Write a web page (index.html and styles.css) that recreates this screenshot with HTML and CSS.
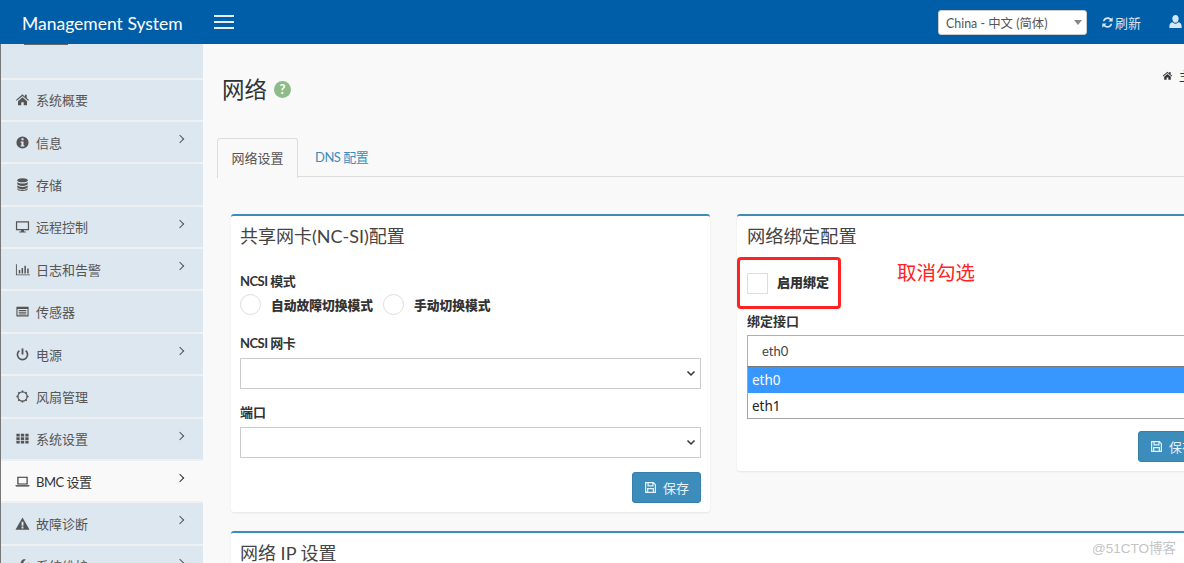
FILE: index.html
```html
<!DOCTYPE html>
<html>
<head>
    <title>Management System</title>
    <link rel="stylesheet" href="styles.css">
</head>
<body>
    <header class="topbar">
        <div class="brand">Management System</div>
        <div class="burger"><span></span><span></span><span></span></div>
        <div class="topbar-right">
            <div class="lang">China - 中文 (简体)<i class="lang-caret"></i></div>
            <div class="refresh">
                <svg width="13" height="13" viewBox="0 0 16 16"><path fill="#d5e6f5" d="M2.2 6.6C2.8 3.6 5.2 1.6 8.2 1.6c1.7 0 3.2.7 4.3 1.7L14.4 1.5v5.3H9.1l2-2c-.7-.7-1.8-1.1-2.9-1.1-1.9 0-3.4 1.200-4 2.900zM13.800 9.400c-.6 3-3 5-6 5-1.700 0-3.200-.7-4.300-1.700l-1.900 1.800V9.200h5.300l-2 2c.7.7 1.800 1.100 2.900 1.100 1.900 0 3.400-1.200 4-2.900z"/></svg>
                <span>刷新</span>
            </div>
            <svg class="user" width="15" height="15" viewBox="0 0 16 16"><path fill="#d5e6f5" d="M8 1c2 0 3.400 1.600 3.400 3.800S10 9.400 8 9.400 4.600 7 4.600 4.800 6 1 8 1zM5.200 8.800C6 9.800 7 10.400 8 10.400s2-.6 2.800-1.600c2 .3 3.700 1.500 3.700 3.800V15h-13v-2.400c0-2.300 1.700-3.500 3.700-3.800z"/></svg>
        </div>
    </header>

    <div class="layout">
        <nav class="sidebar">
            <div class="nav-top"><div class="nav-line"></div></div>
            <div class="nav-item">
                <svg class="nav-icon" viewBox="0 0 16 16"><path d="M8 2.500 1 8.500l.8.900L8 4.200l6.200 5.200.8-.9-2.500-2.100V3h-2v2.100zM3.200 9.800V14h3.500v-3h2.600v3h3.500V9.800L8 5.700z"/></svg>
                <span>系统概要</span>
            </div>
            <div class="nav-item">
                <svg class="nav-icon" viewBox="0 0 16 16"><path fill-rule="evenodd" d="M8 1.500a6.500 6.500 0 1 1 0 13 6.500 6.500 0 0 1 0-13zM6.900 3.500v2h2.200v-2zM6 6.800v1.400h.9v2.600H6v1.400h4v-1.400h-.9v-4z"/></svg>
                <span>信息</span><i class="chev"></i>
            </div>
            <div class="nav-item">
                <svg class="nav-icon" viewBox="0 0 16 16"><ellipse cx="8" cy="3.500" rx="5.500" ry="2.200"/><path d="M2.500 5.200c.8 1.200 3 1.800 5.500 1.800s4.700-.6 5.500-1.800v2.300C13.500 8.700 11 9.500 8 9.500s-5.500-.8-5.500-2zM2.500 8.800c.8 1.200 3 1.800 5.500 1.800s4.700-.6 5.500-1.800V11c0 1.200-2.500 2-5.500 2s-5.500-.8-5.500-2zM2.500 12.100c.8 1.100 3 1.600 5.500 1.600s4.700-.5 5.500-1.600v1c0 1-2.500 1.800-5.500 1.800s-5.500-.8-5.500-1.800z"/></svg>
                <span>存储</span>
            </div>
            <div class="nav-item">
                <svg class="nav-icon" viewBox="0 0 16 16"><path fill-rule="evenodd" d="M1 2.500h14v9.500H9.500v1.200h2v1.200h-7v-1.200h2V12H1zM2.300 3.800v6.900h11.400V3.800z"/></svg>
                <span>远程控制</span><i class="chev"></i>
            </div>
            <div class="nav-item">
                <svg class="nav-icon" viewBox="0 0 16 16"><path d="M1 2.500h1v10.700h14v1H1zM4 8.500h1.600v3.800H4zM7 6.500h1.600v5.800H7zM10 4h1.600v8.300H10zM13 7h1.600v5.300H13z"/></svg>
                <span>日志和告警</span><i class="chev"></i>
            </div>
            <div class="nav-item">
                <svg class="nav-icon" viewBox="0 0 16 16"><path fill-rule="evenodd" d="M1.500 2.800h13v10.400h-13zM2.700 5.200v6.800h10.600V5.200zM4 6.500h8v1H4zM4 8.300h8v1H4zM4 10.100h8v1H4z"/></svg>
                <span>传感器</span>
            </div>
            <div class="nav-item">
                <svg class="nav-icon" viewBox="0 0 16 16"><path d="M7 1.500h2v6.500H7z"/><path fill="none" stroke="#555" stroke-width="1.800" d="M4.700 3.800a5.400 5.400 0 1 0 6.600 0"/></svg>
                <span>电源</span><i class="chev"></i>
            </div>
            <div class="nav-item">
                <svg class="nav-icon" viewBox="0 0 16 16"><circle cx="8" cy="8" r="4.900" fill="none" stroke="#555" stroke-width="1.300"/><path d="M7.200 1.500h1.600v2H7.200zM7.200 12.500h1.600v2H7.200zM1.500 7.200h2v1.600h-2zM12.500 7.200h2v1.600h-2zM3 4.100l1.100-1.100 1.400 1.400-1.100 1.100zM10.500 11.600l1.100-1.100 1.400 1.400-1.100 1.100zM3 11.900l1.400-1.400 1.100 1.100-1.400 1.400zM10.500 4.400l1.400-1.400 1.100 1.100-1.400 1.400z"/></svg>
                <span>风扇管理</span>
            </div>
            <div class="nav-item">
                <svg class="nav-icon" viewBox="0 0 16 16"><path d="M1.500 3h3.500v2.800H1.500zM6.200 3h3.600v2.800H6.200zM11 3h3.500v2.800H11zM1.500 6.700h3.500v2.800H1.500zM6.200 6.700h3.600v2.800H6.200zM11 6.700h3.500v2.800H11zM1.500 10.400h3.500v2.800H1.500zM6.200 10.400h3.600v2.800H6.200zM11 10.400h3.500v2.800H11z"/></svg>
                <span>系统设置</span><i class="chev"></i>
            </div>
            <div class="nav-item active">
                <svg class="nav-icon" viewBox="0 0 16 16"><path fill-rule="evenodd" d="M2.500 2.800h11v8.400h-11zM3.700 4v6h8.600V4zM.5 12h15v.6l-.7.800H1.200l-.7-.8z"/></svg>
                <span class="tight">BMC 设置</span><i class="chev"></i>
            </div>
            <div class="nav-item">
                <svg class="nav-icon" viewBox="0 0 16 16"><path fill-rule="evenodd" d="M8 1.500l7.500 13.200H.5zM7 6v4.500h2V6zM7 11.300v1.900h2v-1.900z"/></svg>
                <span>故障诊断</span><i class="chev"></i>
            </div>
            <div class="nav-item">
                <svg class="nav-icon" viewBox="0 0 16 16"><path d="M14.500 4.500l-2.700 2.600-2.300-.6-.6-2.300L11.500 1.500C9.800 1 8 1.500 7 2.800 6 4 5.900 5.500 6.400 6.800L1.500 11.700c-.7.700-.7 1.900 0 2.600s1.900.7 2.600 0l4.900-4.900c1.300.5 2.800.3 4-.6 1.400-1.100 1.900-2.600 1.500-4.300z"/></svg>
                <span>系统维护</span><i class="chev"></i>
            </div>
        </nav>

        <main class="content">
            <div class="crumb">
                <svg width="11" height="11" viewBox="0 0 16 16"><path fill="#333" d="M8 2.500 1 8.500l.8.900L8 4.200l6.200 5.200.8-.9-2.500-2.100V3h-2v2.100zM3.200 9.800V14h3.500v-3h2.600v3h3.500V9.800L8 5.700z"/></svg>
                <span>主页</span>
            </div>
            <div class="page-title">
                <h1>网络</h1>
                <span class="help">?</span>
            </div>
            <div class="tabs">
                <div class="tab current">网络设置</div>
                <div class="tab link tight">DNS 配置</div>
            </div>

            <div class="panels">
                <section class="panel">
                    <h2>共享网卡(NC-SI)配置</h2>
                    <label class="field-label mode-label tight">NCSI 模式</label>
                    <div class="radios">
                        <span class="radio"></span><b>自动故障切换模式</b>
                        <span class="radio"></span><b>手动切换模式</b>
                    </div>
                    <label class="field-label tight">NCSI 网卡</label>
                    <div class="select"><svg width="10" height="7" viewBox="0 0 10 7"><path fill="none" stroke="#333" stroke-width="1.500" d="M1.500 1.500 5 5l3.500-3.500"/></svg></div>
                    <label class="field-label">端口</label>
                    <div class="select"><svg width="10" height="7" viewBox="0 0 10 7"><path fill="none" stroke="#333" stroke-width="1.500" d="M1.500 1.500 5 5l3.500-3.500"/></svg></div>
                    <div class="actions">
                        <div class="btn">
                            <svg width="13" height="13" viewBox="0 0 16 16"><path fill="none" stroke="#e6f1f8" stroke-width="1.500" d="M2 2h9.500L14 4.500V14H2zM5 2v4h6V2M4.500 14V9.500h7V14"/></svg>
                            <span>保存</span>
                        </div>
                    </div>
                </section>

                <section class="panel bond">
                    <h2>网络绑定配置</h2>
                    <div class="check-row">
                        <span class="check"></span><b>启用绑定</b>
                        <div class="red-box"></div>
                    </div>
                    <div class="note">取消勾选</div>
                    <label class="field-label">绑定接口</label>
                    <div class="bond-select">eth0</div>
                    <ul class="options">
                        <li class="picked">eth0</li>
                        <li>eth1</li>
                    </ul>
                    <div class="actions">
                        <div class="btn">
                            <svg width="13" height="13" viewBox="0 0 16 16"><path fill="none" stroke="#e6f1f8" stroke-width="1.500" d="M2 2h9.500L14 4.500V14H2zM5 2v4h6V2M4.500 14V9.500h7V14"/></svg>
                            <span>保存</span>
                        </div>
                    </div>
                </section>

                <section class="panel wide">
                    <h2>网络 IP 设置</h2>
                </section>
            </div>
        </main>
    </div>
    <div class="watermark">@51CTO博客</div>
</body>
</html>
```

FILE: styles.css
```css
html, body {
    margin: 0;
    height: 563px;
    overflow: hidden;
}
body {
    position: relative;
    font-family: "Lato", "Noto Sans CJK SC", sans-serif;
    font-size: 13px;
    color: #333;
    background: #f9f9f9;
}
.tight {
    letter-spacing: -.5px;
}
.topbar {
    height: 44px;
    background: #005ea8;
    color: #fff;
    display: flex;
    align-items: center;
    padding-left: 22px;
}
.brand {
    font-size: 17.5px;
    width: 192px;
    white-space: nowrap;
    margin-top: 2px;
}
.burger {
    width: 20px;
    display: flex;
    flex-direction: column;
    gap: 4px;
    margin-top: -1px;
}
.burger span {
    height: 2px;
    background: #e3eef7;
}
.topbar-right {
    margin-left: auto;
    display: flex;
    align-items: center;
    width: 246px;
    flex: none;
}
.lang {
    width: 149px;
    height: 25px;
    line-height: 25px;
    padding-left: 7px;
    box-sizing: border-box;
    background: #fff;
    border: 1px solid #ccc;
    border-radius: 3px;
    color: #555;
    font-size: 12.4px;
    position: relative;
}
.lang-caret {
    position: absolute;
    right: 4px;
    top: 9px;
    border: 4px solid transparent;
    border-top: 5px solid #888;
    border-bottom: 0;
}
.refresh {
    display: flex;
    align-items: center;
    gap: 1px;
    margin-left: 14px;
    color: #d5e6f5;
    width: 67px;
    flex: none;
}
.user {
    margin-top: -2px;
    flex: none;
}

.layout {
    display: flex;
    height: 519px;
}
.sidebar {
    width: 202px;
    flex: none;
    background: #f9f9f9;
    border-left: 1px solid #777;
    color: #555;
    overflow: hidden;
}
.nav-top {
    height: 33.5px;
    background: #dde7f0;
    border-bottom: 2px solid #eef1f3;
}
.nav-line {
    width: 44px;
    height: 1px;
    margin-left: 23px;
    background: #666;
}
.nav-item {
    height: 40.4px;
    background: #dde7f0;
    border-bottom: 2px solid #eef1f3;
    display: flex;
    align-items: center;
    padding-left: 14px;
    position: relative;
}
.nav-item.active {
    background: #f9f9f9;
    color: #333;
}
.nav-icon {
    width: 15px;
    height: 15px;
    fill: #555;
    margin-right: 6px;
    flex: none;
}
.active .nav-icon { fill: #333; }
.chev {
    position: absolute;
    right: 20px;
    top: 14px;
    width: 5px;
    height: 5px;
    border-top: 1px solid #555;
    border-right: 1px solid #555;
    transform: rotate(45deg);
}
.active .chev { border-color: #333; }

.content {
    flex: 1;
    min-width: 0;
    position: relative;
    padding-left: 14px;
}
.crumb {
    position: absolute;
    left: 959px;
    top: 23px;
    display: flex;
    align-items: center;
    gap: 6px;
    font-size: 12px;
    white-space: nowrap;
}
.page-title {
    display: flex;
    align-items: center;
    gap: 7px;
    height: 36px;
    margin: 26px 0 0 5px;
}
.page-title h1 {
    margin: 0;
    font-size: 22.5px;
    font-weight: 400;
}
.help {
    width: 17px;
    height: 17px;
    margin-top: 3px;
    border-radius: 50%;
    background: #8dbb8a;
    color: #fff;
    font-size: 13px;
    font-weight: 700;
    line-height: 17px;
    text-align: center;
}
.tabs {
    display: flex;
    margin-top: 32px;
    height: 38px;
    border-bottom: 1px solid #ddd;
}
.tab {
    padding: 0 13.5px;
    line-height: 38px;
    height: 38px;
}
.tab.current {
    background: #f9f9f9;
    border: 1px solid #ddd;
    border-bottom: 0;
    border-radius: 3px 3px 0 0;
    height: 39px;
    color: #555;
}
.tab.link {
    color: #3c8dbc;
    padding-left: 17px;
}
.panels {
    display: grid;
    grid-template-columns: 479px 479px;
    column-gap: 27px;
    row-gap: 19px;
    align-items: start;
    margin: 37px 0 0 14px;
}
.panel {
    background: #fff;
    border-top: 2px solid #3c8dbc;
    border-radius: 3px;
    box-shadow: 0 1px 2px rgba(0, 0, 0, .08);
    padding: 0 9px 9px;
    box-sizing: border-box;
}
.panel h2 {
    margin: 0;
    font-size: 18px;
    font-weight: 400;
    line-height: 40px;
    color: #444;
}
.bond h2 { font-size: 18.3px; }
.field-label {
    display: block;
    font-weight: 700;
    line-height: 18px;
}
.mode-label { margin-top: 16px; }
.radios {
    display: flex;
    align-items: center;
    height: 22px;
    margin: 3px 0 19px;
    font-size: 12.75px;
    font-weight: 700;
}
.radios b { margin: 0 10px; }
.radio {
    width: 19px;
    height: 19px;
    border: 1px solid #ddd;
    border-radius: 50%;
}
.select {
    height: 29px;
    border: 1px solid #ccc;
    margin: 6px 0 14px;
    display: flex;
    align-items: center;
    justify-content: flex-end;
    padding-right: 4px;
}
.actions {
    display: flex;
    justify-content: flex-end;
}
.btn {
    width: 69px;
    height: 31px;
    box-sizing: border-box;
    background: #3c8dbc;
    border: 1px solid #367fa9;
    border-radius: 3px;
    color: #e6f1f8;
    display: flex;
    align-items: center;
    justify-content: center;
    gap: 6px;
    flex: none;
}
.wide {
    grid-column: 1 / 3;
    width: 1100px;
    height: 60px;
}
.bond {
    position: relative;
    padding-left: 10px;
}
.bond .actions {
    justify-content: flex-start;
    margin-left: 391px;
}
.check-row {
    display: flex;
    align-items: center;
    height: 54px;
    margin-bottom: 2px;
    position: relative;
    font-weight: 700;
}
.check-row b { padding-bottom: 4px; }
.check {
    width: 19px;
    height: 19px;
    border: 1px solid #ddd;
    margin-right: 9px;
}
.red-box {
    position: absolute;
    left: -10px;
    top: 1px;
    width: 104px;
    height: 52px;
    box-sizing: border-box;
    border: 3px solid #f22;
    border-radius: 4px;
}
.note {
    position: absolute;
    left: 160px;
    top: 44px;
    color: #f22;
    font-size: 19.5px;
    line-height: 26px;
}
.bond-select {
    height: 31px;
    line-height: 31px;
    box-sizing: border-box;
    border: 1px solid #8cb9d6;
    border-bottom: 0;
    padding-left: 14px;
    margin-top: 5px;
    color: #444;
}
.options {
    list-style: none;
    margin: 0 0 12px;
    padding: 0;
    border: 1px solid #a5a5a5;
    border-top: 1px solid #777;
    font-family: "Noto Sans", sans-serif;
    font-size: 13.5px;
}
.options li {
    height: 25.5px;
    line-height: 27px;
    padding-left: 4px;
    color: #222;
}
.options li.picked {
    background: #3797ff;
    color: #fff;
}
.watermark {
    position: absolute;
    right: 8px;
    bottom: 6px;
    font-family: "Liberation Sans", "Noto Sans CJK SC", sans-serif;
    font-size: 13.5px;
    color: #c4c4c4;
}
```
